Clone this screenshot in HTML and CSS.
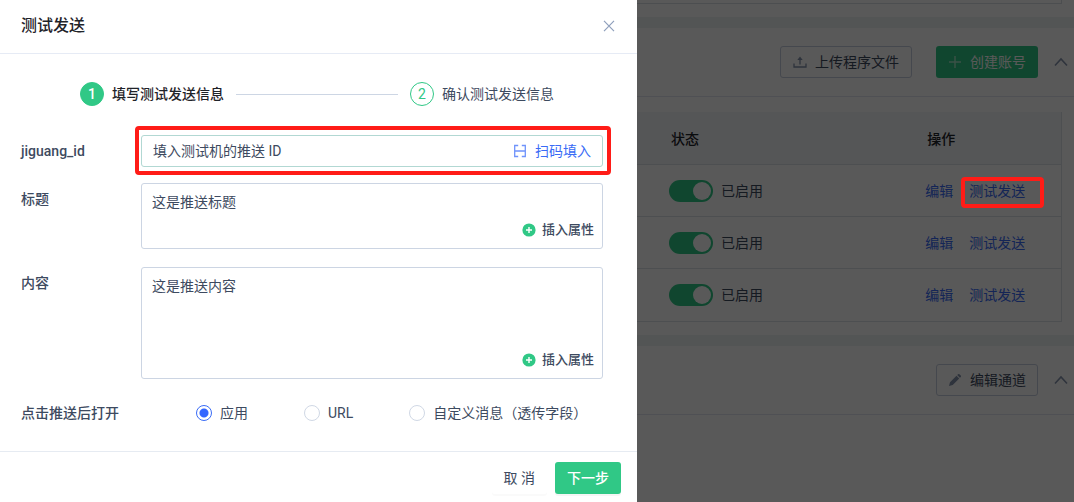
FILE: index.html
```html
<!DOCTYPE html>
<html lang="zh-CN">
<head>
<meta charset="utf-8">
<meta name="viewport" content="width=device-width, initial-scale=1">
<title>测试发送</title>
<link rel="stylesheet" href="styles.css">
</head>
<body>
<div class="layout">
  <section class="dialog" role="dialog" aria-labelledby="dialog-title">
    <header class="dialog-head">
      <h1 class="dialog-title" id="dialog-title">测试发送</h1>
      <button class="close" type="button" aria-label="关闭">
        <svg width="12" height="12" viewBox="0 0 12 12" fill="none" stroke="currentColor" stroke-width="1.2"><path d="M1 .8l10 10.4M11 .8L1 11.2"/></svg>
      </button>
    </header>
    <form class="dialog-form">
      <div class="dialog-body">
        <ol class="steps">
          <li class="step step-current"><span class="step-num">1</span><span>填写测试发送信息</span></li>
          <li class="step-line" aria-hidden="true"></li>
          <li class="step"><span class="step-num">2</span><span>确认测试发送信息</span></li>
        </ol>
        <div class="field">
          <label class="label" for="push-id">jiguang_id</label>
          <div class="box box-id">
            <input class="text" id="push-id" type="text" value="填入测试机的推送 ID">
            <button class="scan" type="button">
              <svg width="14" height="14" viewBox="0 0 14 14" fill="none" stroke="#6f93fb" stroke-width="1.3"><path d="M5.200 1.500H1.700V12.500H5.200M8.800 1.500h3.500V12.500H8.800M1.700 7h10.600"/></svg>
              <span>扫码填入</span>
            </button>
          </div>
        </div>
        <div class="field">
          <label class="label" for="push-title">标题</label>
          <div class="box box-area">
            <textarea class="area area-title" id="push-title">这是推送标题</textarea>
            <button class="insert" type="button">
              <svg width="14" height="14" viewBox="0 0 14 14"><circle cx="7" cy="7" r="6.600" fill="#30c886"/><path d="M7 4v6M4 7h6" stroke="#fff" stroke-width="1.400"/></svg>
              <span>插入属性</span>
            </button>
          </div>
        </div>
        <div class="field">
          <label class="label" for="push-content">内容</label>
          <div class="box box-area">
            <textarea class="area area-content" id="push-content">这是推送内容</textarea>
            <button class="insert" type="button">
              <svg width="14" height="14" viewBox="0 0 14 14"><circle cx="7" cy="7" r="6.600" fill="#30c886"/><path d="M7 4v6M4 7h6" stroke="#fff" stroke-width="1.400"/></svg>
              <span>插入属性</span>
            </button>
          </div>
        </div>
        <div class="choices" role="radiogroup" aria-labelledby="open-label">
          <span class="choices-label" id="open-label">点击推送后打开</span>
          <div class="options">
            <label class="option"><input class="radio" type="radio" name="open" checked><span>应用</span></label>
            <label class="option"><input class="radio" type="radio" name="open"><span>URL</span></label>
            <label class="option"><input class="radio" type="radio" name="open"><span>自定义消息（透传字段）</span></label>
          </div>
        </div>
      </div>
      <footer class="dialog-foot">
        <button class="btn btn-plain" type="button">取 消</button>
        <button class="btn btn-primary" type="button">下一步</button>
      </footer>
    </form>
  </section>

  <main class="page">
    <section class="panel panel-top"><div class="panel-end"></div></section>
    <section class="panel">
      <header class="panel-head">
        <button class="btn btn-outline btn-upload" type="button">
          <svg width="14" height="14" viewBox="0 0 14 14" fill="none" stroke="currentColor" stroke-width="1.300"><path d="M1 8.500v3.500h12V8.500M7 9.500V3"/><path d="M4.300 5L7 1.500 9.700 5z" fill="currentColor" stroke="none"/></svg>
          <span>上传程序文件</span>
        </button>
        <button class="btn btn-create" type="button">
          <svg width="14" height="14" viewBox="0 0 14 14" fill="none" stroke="#a9e8cb" stroke-width="1.400"><path d="M7 1v12M1 7h12"/></svg>
          <span>创建账号</span>
        </button>
        <button class="fold" type="button" aria-label="收起">
          <svg width="14" height="10" viewBox="0 0 14 10" fill="none" stroke="currentColor" stroke-width="1.600"><path d="M1 8.500L7 2l6 6.500"/></svg>
        </button>
      </header>
      <div class="panel-table">
        <table class="table">
          <thead>
            <tr><th class="col-state">状态</th><th>操作</th></tr>
          </thead>
          <tbody>
            <tr>
              <td><label class="state"><input class="switch" type="checkbox" role="switch" checked><span>已启用</span></label></td>
              <td><div class="links"><a class="link" href="#edit">编辑</a><a class="link link-marked" href="#test">测试发送</a></div></td>
            </tr>
            <tr>
              <td><label class="state"><input class="switch" type="checkbox" role="switch" checked><span>已启用</span></label></td>
              <td><div class="links"><a class="link" href="#edit">编辑</a><a class="link" href="#test">测试发送</a></div></td>
            </tr>
            <tr>
              <td><label class="state"><input class="switch" type="checkbox" role="switch" checked><span>已启用</span></label></td>
              <td><div class="links"><a class="link" href="#edit">编辑</a><a class="link" href="#test">测试发送</a></div></td>
            </tr>
          </tbody>
        </table>
      </div>
    </section>
    <section class="panel panel-last">
      <header class="panel-head">
        <button class="btn btn-outline" type="button">
          <svg width="14" height="14" viewBox="0 0 14 14" fill="currentColor"><path d="M1 13l1-3.700 6.500-6.500 2.700 2.700L4.700 12zM9.200 2.100l.9-.9q.7-.5 1.300 0l1.400 1.400q.5.700 0 1.300l-.9.900z"/></svg>
          <span>编辑通道</span>
        </button>
        <button class="fold" type="button" aria-label="收起">
          <svg width="14" height="10" viewBox="0 0 14 10" fill="none" stroke="currentColor" stroke-width="1.600"><path d="M1 8.500L7 2l6 6.500"/></svg>
        </button>
      </header>
    </section>
  </main>
</div>
</body>
</html>
```

FILE: styles.css
```css
*, *::before, *::after { box-sizing: border-box; }

body {
  margin: 0;
  font: 14px/22px Roboto, "Noto Sans CJK SC", sans-serif;
  color: #3d4a60;
}

button, input, textarea { font: inherit; color: inherit; }
button { padding: 0; border: 0; background: none; cursor: pointer; }
svg { flex: none; }

.layout {
  display: grid;
  grid-template-columns: minmax(0, 637fr) minmax(0, 437fr);
  min-height: 100vh;
}

/* Dialog */
.dialog {
  display: flex;
  flex-direction: column;
  background: #fff;
}
.dialog-head {
  display: flex;
  align-items: center;
  justify-content: space-between;
  height: 54px;
  padding: 0 22px 1px 21px;
  border-bottom: 1px solid #e6ebf5;
}
.dialog-title {
  margin: 0;
  font-size: 16px;
  line-height: 24px;
  font-weight: 500;
  color: #1f2329;
}
.close { display: flex; color: #8f9fbc; }
.dialog-form {
  flex: 1;
  display: flex;
  flex-direction: column;
}
.dialog-body {
  flex: 1;
  padding: 28px 34px 0 21px;
}

.steps {
  display: flex;
  align-items: center;
  gap: 12px;
  margin: 0 49px 29px 59px;
  padding: 0;
  list-style: none;
}
.step {
  display: flex;
  align-items: center;
  gap: 8px;
  white-space: nowrap;
}
.step-current { color: #1f2329; font-weight: 500; }
.step-num {
  width: 24px;
  height: 24px;
  border: 1px solid #30c886;
  border-radius: 50%;
  line-height: 22px;
  text-align: center;
  color: #30c886;
}
.step-current .step-num { background: #30c886; color: #fff; }
.step-line { flex: 1; height: 1px; background: #cdd6e4; }

.field {
  display: grid;
  grid-template-columns: 120px minmax(0, 1fr);
  margin-bottom: 16px;
}
.label { padding-top: 5px; font-weight: 500; }
.box {
  border: 1px solid #ccd5e3;
  border-radius: 3px;
}
.box-id {
  position: relative;
  display: flex;
  align-items: center;
  height: 32px;
  padding: 0 11px;
  border-color: #b2d8d3;
}
.box-id::after,
.link-marked::after {
  content: "";
  position: absolute;
  border: 4px solid #ff1c17;
  border-radius: 4px;
  pointer-events: none;
}
.box-id::after { inset: -10px -9px -9px -7px; }
.text {
  flex: 1;
  min-width: 0;
  padding: 0;
  border: 0;
  outline: 0;
  background: none;
}
.scan {
  display: flex;
  align-items: center;
  gap: 8px;
  color: #3a6cf6;
}
.box-area {
  display: flex;
  flex-direction: column;
  padding: 7px 8px 7px 10px;
}
.area {
  display: block;
  width: 100%;
  padding: 0;
  border: 0;
  outline: 0;
  resize: none;
  background: none;
}
.area-title { height: 28px; }
.area-content { height: 74px; }
.field:has(.box-area) { margin-bottom: 18px; }
.insert {
  align-self: flex-end;
  display: flex;
  align-items: center;
  gap: 6px;
  font-size: 13px;
  font-weight: 500;
}

.choices {
  display: flex;
  align-items: center;
  gap: 77px;
  margin: 23px 0 27px;
}
.choices-label { font-weight: 500; }
.options { display: flex; gap: 56px; white-space: nowrap; }
.option { display: flex; align-items: center; gap: 8px; }
.radio {
  appearance: none;
  width: 16px;
  height: 16px;
  margin: 0;
  border: 1px solid #d0d8e5;
  border-radius: 50%;
  background: #fff;
}
.radio:checked {
  border-color: #3a6cf6;
  background: radial-gradient(circle, #3366ff 4px, #fff 5px);
}

.dialog-foot {
  display: flex;
  justify-content: flex-end;
  gap: 8px;
  padding: 10px 16px 8px;
  border-top: 1px solid #e6ebf2;
}

/* Buttons */
.btn {
  display: flex;
  align-items: center;
  justify-content: center;
  gap: 8px;
  height: 32px;
  padding: 0 12px;
  border-radius: 3px;
  white-space: nowrap;
}
.btn-plain { box-shadow: 0 2px 0 rgba(0, 0, 0, .02); }
.btn-primary { background: #30c886; color: #fff; font-weight: 500; box-shadow: 0 2px 0 rgba(0, 0, 0, .04); }
.btn-create { background: #30c886; color: #fff; }
.btn-outline { padding: 0 11px; border: 1px solid #c5cede; }
.btn-outline svg { color: #8493ac; }
.btn-upload { margin-right: 8px; padding: 0 12px; }

/* Page behind the mask */
.page {
  position: relative;
  isolation: isolate;
  display: flex;
  flex-direction: column;
  gap: 11px;
  overflow: hidden;
  background: #eef4f2;
}
.page::after {
  content: "";
  position: absolute;
  inset: 0;
  z-index: 1;
  background: rgba(0, 0, 0, .65);
}
.panel { background: #fff; }
.panel-top { padding: 0 12px 13px 0; }
.panel-end { height: 4px; border: solid #dadfe6; border-width: 0 1px 1px 0; }
.panel-last { flex: 1; }
.panel-head {
  display: flex;
  align-items: center;
  justify-content: flex-end;
  gap: 16px;
  height: 69px;
  padding-right: 6px;
  border-bottom: 1px solid #e3e6f1;
}
.fold { display: flex; color: #8794ae; }
.panel-table { padding: 15px 12px 13px 0; }
.table {
  width: 100%;
  border-collapse: separate;
  border-spacing: 0;
  border-right: 1px solid #dde2e8;
}
.table th, .table td {
  height: 52px;
  padding: 0;
  border-bottom: 1px solid #dde2e8;
  text-align: left;
}
.table tr:last-child td { height: 53px; }
.table th {
  height: 53px;
  padding: 2px 0 0 2px;
  background: #f3f6f9;
  color: #1f2329;
  font-weight: 500;
}
.table .col-state { width: 68%; padding-left: 34px; }
.table td:first-child { padding-left: 32px; }
.state { display: flex; align-items: center; gap: 8px; }
.switch {
  appearance: none;
  display: flex;
  justify-content: flex-end;
  width: 44px;
  height: 22px;
  margin: 0;
  padding: 2px;
  border-radius: 11px;
  background: #30c886;
}
.switch::before {
  content: "";
  width: 18px;
  height: 18px;
  border-radius: 50%;
  background: #fff;
}
.links { display: flex; gap: 16px; }
.link { color: #3a6cf6; text-decoration: none; white-space: nowrap; }
.link-marked { position: relative; }
.link-marked::after { inset: -3px -19px -6px -8px; z-index: 2; }
```
